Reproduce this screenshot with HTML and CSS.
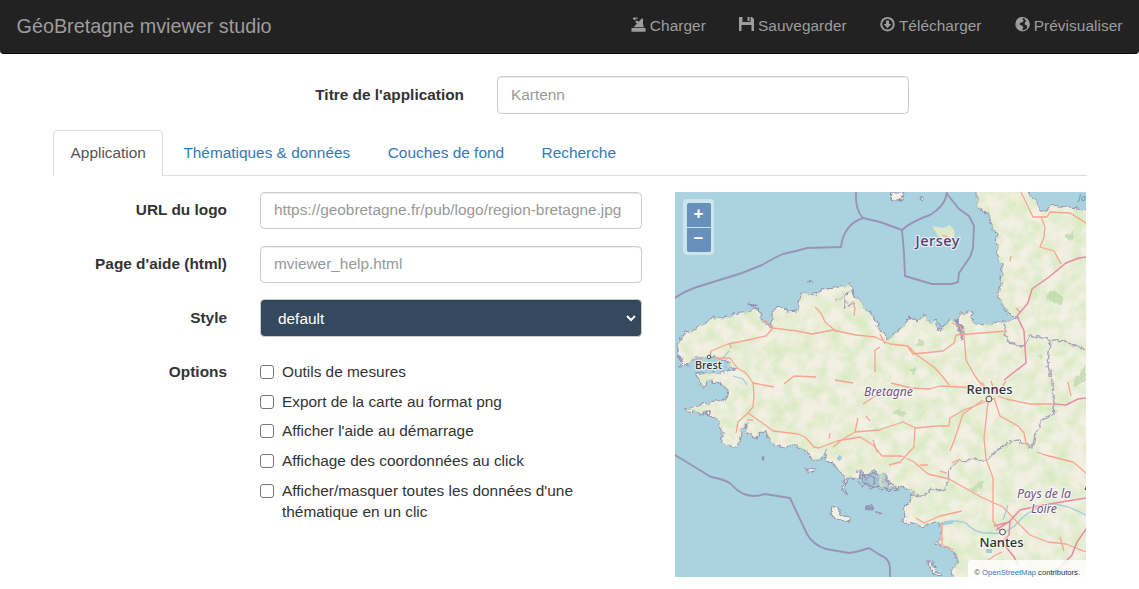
FILE: index.html
```html
<!DOCTYPE html>
<html lang="fr">
<head>
<meta charset="utf-8">
<title>GéoBretagne mviewer studio</title>
<link rel="stylesheet" href="styles.css">
</head>
<body>
<nav class="navbar">
  <a class="brand">GéoBretagne mviewer studio</a>
  <ul class="actions">
    <li><svg class="icon" viewBox="0 0 15 16"><path d="M.5 12h14v3.800H.5z M2.500 11.300L6 7.500 4.200 5.800 5.800 4.300l1.700 1.500L10.800 2.500H12v6l1 2.800z"/><path d="M1.500 2.500l2-1.300 1.700 1.700L3.500 4.300z M4.500 1.500h2v1.200h-2z"/></svg><span>Charger</span></li>
    <li><svg class="icon" viewBox="0 0 15 16"><path d="M0 1h3.500v5h8V1H13l2 2v12h-2.500V9h-10v6H0z M8.500 1h2v4h-2z"/></svg><span>Sauvegarder</span></li>
    <li><svg class="icon" viewBox="0 0 15 16"><circle cx="7.500" cy="8.200" r="6.300" fill="none" stroke="currentColor" stroke-width="1.900"/><path d="M6 4.500h3V8h2.300l-3.800 4.200L3.700 8H6z"/></svg><span>Télécharger</span></li>
    <li><svg class="icon" viewBox="0 0 15 16"><circle cx="7.500" cy="8.200" r="6.700" fill="none" stroke="currentColor" stroke-width="1.100"/><path d="M1 7c0-3 2-5 5-5.700l2 .8-.5 1.600 1.500.8-2 2-1.800.3-.7 1.700 2.800 1.200 1 1.800-1.500 3.500C3 14.500 1 11 1 7z M9.500 2l3 1.500 2 4-.5 3.500-1.500 1.500-.8-3.200-2-.8.300-2.500 1.500-1-1.500-1z"/></svg><span>Prévisualiser</span></li>
  </ul>
</nav>
<main class="container">
  <div class="title-row">
    <label class="label" for="title">Titre de l'application</label>
    <input class="control title-input" id="title" placeholder="Kartenn">
  </div>
  <ul class="tabs">
    <li class="tab active">Application</li>
    <li class="tab">Thématiques &amp; données</li>
    <li class="tab">Couches de fond</li>
    <li class="tab">Recherche</li>
  </ul>
  <div class="panel">
    <form class="form">
      <label class="label">URL du logo</label>
      <input class="control" placeholder="https://geobretagne.fr/pub/logo/region-bretagne.jpg">
      <label class="label">Page d'aide (html)</label>
      <input class="control" placeholder="mviewer_help.html">
      <label class="label">Style</label>
      <div class="control select"><span>default</span><svg class="chevron" viewBox="0 0 10 7"><path d="M1 1l4 4 4-4"/></svg></div>
      <label class="label">Options</label>
      <div class="options">
        <label class="option"><span class="box"></span><span>Outils de mesures</span></label>
        <label class="option"><span class="box"></span><span>Export de la carte au format png</span></label>
        <label class="option"><span class="box"></span><span>Afficher l'aide au démarrage</span></label>
        <label class="option"><span class="box"></span><span>Affichage des coordonnées au click</span></label>
        <label class="option"><span class="box"></span><span>Afficher/masquer toutes les données d'une thématique en un clic</span></label>
      </div>
    </form>
    <div class="map">
      <svg class="map-canvas" viewBox="675 192 411 385">
        <defs>
          <filter id="rough" filterUnits="userSpaceOnUse" x="665" y="182" width="431" height="405">
            <feTurbulence type="fractalNoise" baseFrequency="0.16" numOctaves="3" seed="4"/>
            <feDisplacementMap in="SourceGraphic" scale="7" xChannelSelector="R" yChannelSelector="G"/>
          </filter>
          <filter id="veg" filterUnits="userSpaceOnUse" x="675" y="192" width="411" height="385" color-interpolation-filters="sRGB">
            <feTurbulence type="fractalNoise" baseFrequency="0.07" numOctaves="5" seed="9"/>
            <feColorMatrix values="0 0 0 0 0.85  0 0 0 0 0.92  0 0 0 0 0.76  2.2 0 0 0 -0.75"/>
          </filter>
          <clipPath id="land"><path d="M678 342L685 332 695 330 700 326 707 322 713 317 723 318 733 315 742 312 750 312 757 308 761 313 761 320 767 323 770 328 773 318 773 311 782 308 787 312 798 311 798 303 802 295 803 292 813 295 823 290 833 288 845 285 850 283 853 290 855 297 862 302 865 308 872 315 880 330 887 340 895 333 902 327 910 318 917 322 925 315 930 323 935 320 937 330 943 327 948 323 952 318 958 327 960 340 963 328 957 318 960 313 973 311 971 317 973 322 983 325 1000 322 1013 321 1020 317 1013 315 1007 312 1001 303 998 292 1001 282 1002 265 999 263 997 252 998 232 993 230 992 222 987 212 977 207 975 192H1086V577H953L952 570 958 562 955 553 947 547 935 543 941 537 940 523 933 522 923 527 913 523 903 522 905 515 903 508 910 502 912 493 905 488 897 486 890 488 880 487 877 470 867 475 860 470 857 479 847 477 842 475 837 468 825 458 828 450 820 460 812 460 805 450 793 445 783 447 770 443 767 433 760 432 757 438 745 432 748 422 743 427 741 437 737 447 722 445 722 430 717 420 707 411 700 413 683 410 710 403 723 400 729 398 728 390 720 383 707 380 703 388 697 375 707 373 727 372 737 368 727 367 730 362 713 357 695 358 688 365 680 366 682 362 678 352z"/></clipPath>
        </defs>
        <rect x="675" y="192" width="411" height="385" fill="#aad3df"/>
        <g filter="url(#rough)" stroke="#9590b0" stroke-width="1.200" stroke-linejoin="round">
          <path fill="#f2efe3" d="M678 342L685 332 695 330 700 326 707 322 713 317 723 318 733 315 742 312 750 312 757 308 761 313 761 320 767 323 770 328 773 318 773 311 782 308 787 312 798 311 798 303 802 295 803 292 813 295 823 290 833 288 845 285 850 283 853 290 855 297 862 302 865 308 872 315 880 330 887 340 895 333 902 327 910 318 917 322 925 315 930 323 935 320 937 330 943 327 948 323 952 318 958 327 960 340 963 328 957 318 960 313 973 311 971 317 973 322 983 325 1000 322 1013 321 1020 317 1013 315 1007 312 1001 303 998 292 1001 282 1002 265 999 263 997 252 998 232 993 230 992 222 987 212 977 207 975 180H1100V590H953L952 570 958 562 955 553 947 547 935 543 941 537 940 523 933 522 923 527 913 523 903 522 905 515 903 508 910 502 912 493 905 488 897 486 890 488 880 487 877 470 867 475 860 470 857 479 847 477 845 485 847 495 842 487 845 477 837 468 825 458 828 450 820 460 812 460 805 450 793 445 783 447 770 443 767 433 760 432 757 438 745 432 748 422 743 427 741 437 737 447 722 445 722 430 717 420 707 411 700 413 683 410 710 403 723 400 729 398 728 390 720 383 707 380 703 388 697 375 707 373 727 372 737 368 727 367 730 362 713 357 695 358 688 365 680 366 682 362 678 352z"/>
          <path fill="#f2efe3" d="M832 507L839 510 842 514 851 518 849 523 836 520 831 514z M806 468L815 469 814 472 808 471z M928 561L933 561 932 566 942 575 938 577 929 567z M892 192h13l-3 7-11 2z M919 197l4 2-2 3z"/>
          <path fill="#a4c8da" d="M862 474l6 2 6-3 7 2 5-1 2 6 3 4-6 3-6-2-4 3-6-4-6-2z"/>
          <path fill="none" d="M857 471l3 8 4-5 3 6 5-4 3 7 4-6 4 6 3-4 2 6 5-2 5 6-8 2-4-3-5 4-5-5-5 2-4-5-5 3-5-6M936 320l4 5 1 6"/>
          <path fill="#8da5bd" d="M956 319l4 6 4 8-3 7-3-9z M867 505l6 3-3 2-4-3z M877 512l4 1-3 2z M762 457l3 1-2 2z M808 282l5-1z M749 303l7 2-2 2z"/>
          <path fill="none" d="M850 290l-6 7 3 5-2 5M853 302l-4 4M835 301l6-4 3-6"/>
        </g>
        <g clip-path="url(#land)"><rect x="675" y="192" width="411" height="385" filter="url(#veg)"/>
          <g fill="#b9d7a6" filter="url(#rough)" opacity=".7"><path d="M1046 294l10-4 8 8-4 7-10-4zM1066 234l8-4 0 8-8 2zM918 340l7-1-3 8-4-2zM892 413l8-5 8 7-14 1zM972 487l9-7 2 6-6 7-8-2zM909 371l7-4-2 8zM1074 380l12-15v15l-12 9zM1038 355l7 2-4 3z"/></g>
        </g>
        <path filter="url(#rough)" fill="#aad3df" stroke="#9590b0" d="M1028 180L1028 192 1037 202 1041 210 1047 210 1050 205 1067 207 1086 211H1100V180z"/>
        <path fill="#dfe9c8" d="M932 226L943 228 950 225 954 230 955 236 946 240 938 236z"/>
        <g fill="none" stroke="#9993b5" stroke-width="1.900" stroke-linejoin="round">
          <path d="M675 298Q685 291 697 287L742 273 762 265Q776 257 783 254L796 251 807 248 841 247 842 241Q847 223 863 218Q855 210 856 192M863 218L880 222 902 230Q912 221 930 215Q944 207 947 194L959 209 969 216 974 226 973 248 970 257 959 273 958 282 952 284H932L905 276 904 253 902 230M946 196l1-4"/>
          <path d="M675 455L711 477Q724 479 731 484Q737 491 744 494Q754 498 765 494L790 498 807 534Q813 545 826 549L849 553Q858 552 869 548L880 555Q889 558 890 567L890 577"/>
          <path filter="url(#rough)" opacity=".8" stroke-width="1.500" d="M1003 323L1008 341 1017 346 1026 344 1030 335 1047 339 1064 341 1086 350M1050 339L1048 366 1052 384 1055 415 1043 419 1036 434 1032 448 1018 441 1010 442 995 452 988 459 960 461 948 471 946 489 937 491 931 488 925 496 912 494"/>
        </g>
        <g fill="none" stroke="#a5cbdc" stroke-width="1.300"><path d="M941 523q12-4 25 0 9 11 24 10 18 3 30-13 15-15 35-16l14 3 17 8M722 359l7-8M733 376l10 3 4 6"/><path d="M941 524l12-2" stroke-width="3"/><path d="M838 460l3-4M986 551h6" stroke-width="4"/><path d="M1003 520l5-15"/></g>
        <g fill="none" stroke="#f7a48e" stroke-width="1.300" stroke-linejoin="round">
          <path d="M710 357L711 351 728 344 748 340 766 336 773 328 764 320M773 328L797 331 812 334 833 330 856 335 875 337 890 344 908 346 917 355 935 368 943 377 949 385M815 307L821 313 825 322 837 332M853 301l2 8-1 7M908 347l5 7 30-3 11-8 2-8 51-4M952 323l8 3 4 10 2 24 9 16 9 12M880 334l5 10M715 358h15l7 10 9 5 7 10 21 4M784 384l10-8 22 1M835 380l18 3M880 347l-5 3v22M730 344l1 4"/>
          <path d="M753 382l1 14-1 11-5 6 13 9 12 9 25 3 7 3 9 10 5 1 18-7 23-4 13 8 9 11h20l12 6 14 12 21 5 32 18 22 10 15 16 12 12 18 7 18 2 20 8 12 10M748 413l-10 9-2 11M753 420h-6M833 447l10-8 12-7 3-14M855 432l24-2 24-8 13 6 21-2h12l1-8 14-8 31-12M915 427l-1 20-14 15-11 3M988 402l-4 36 2 21 7 19v43l8 11M990 396l-8-14M983 400l-20 14-9 27-4 10M994 398l6 18 18 10 6 7 2 10 5 4M998 396l8 3 24 5h24M996 395l-5-14M997 394l9-13M978 388l-38-2-10 3-19-1-20-5M863 404l12-8 15-4M962 511l-22 5-16 7-8-5M942 523v22l12 5M1037 452l8 3 28 7 13 11M920 465l8 0M940 471l7 2M952 463l8-4M1060 537l4 14M1002 552l-8 4-6 4M873 440l4 12M830 433l-1 6M866 416l4 5M1021 192l12 25h14l3-5 20 1 16 10M1041 217l4 10-1 10-4 10 14 4 7 13M1010 261l1-5M1020 312l-4-4M942 235l8 3M1068 382l3 14"/>
        </g>
        <g fill="none" stroke="#e88aa5" stroke-width="1.500"><path d="M1086 257l-7 1-13 5-17 14-17 12-4 14-11 13 7 15 2 32-13 10-9 7M1054 404l12 1 12-6 8-1M994 526l15-4 11-12 23-5 43-7M1002 542l12 15 4 8M1086 529l-9 13-5 13-14 14-8 8M996 530l14-9-1 14-8 8"/></g>
        <g fill="#f4f0ea" stroke="#555"><circle cx="709" cy="357" r="1.700"/><circle cx="989" cy="399" r="2.900"/><circle cx="1002.500" cy="532" r="2.900"/></g>
        <g class="place">
          <text x="708.500" y="369" textLength="27" class="city small">Brest</text>
          <text x="989.500" y="394" textLength="46" class="city">Rennes</text>
          <text x="1001.500" y="547" textLength="44" class="city">Nantes</text>
          <text x="937.500" y="246" textLength="44" class="island">Jersey</text>
          <text x="888.500" y="396" textLength="49" class="region">Bretagne</text>
          <text x="1044" y="498" textLength="54" class="region">Pays de la</text>
          <text x="1044" y="513" textLength="26" class="region">Loire</text>
          <text x="1082" y="201" class="water">Ja</text>
          <text x="1088" y="490" class="city small">A</text>
        </g>
      </svg>
      <div class="zoom"><span class="zoom-button">+</span><span class="zoom-button">−</span></div>
      <div class="attribution">© <a>OpenStreetMap</a> contributors.</div>
    </div>
  </div>
</main>
</body>
</html>
```
FILE: styles.css
```css
* { box-sizing: border-box; }
body {
  margin: 0;
  overflow: hidden;
  background: #fff;
  color: #333;
  font: 15.4px/22px "Liberation Sans", Arial, sans-serif;
}
ul { list-style: none; margin: 0; padding: 0; }
.navbar {
  height: 54px;
  padding: 0 16.5px 2px 16.5px;
  display: flex;
  justify-content: space-between;
  align-items: center;
  background: #222;
  border-bottom: 1px solid #080808;
  border-radius: 0 0 4px 4px;
  color: #9d9d9d;
}
.brand { font-size: 19.8px; }
.actions { display: flex; gap: 33.2px; letter-spacing: .05px; }
.actions li { display: flex; align-items: center; gap: 4px; white-space: nowrap; }
.icon { width: 15px; height: 16px; fill: currentColor; margin-top: -3px; }
.container { width: 1034px; margin: 22px 0 0 53px; }
.title-row { display: flex; gap: 33px; }
.title-row .label { width: 411px; padding-top: 8px; }
.label { font-weight: 700; text-align: right; padding-top: 7px; }
.control {
  height: 37.4px;
  width: 100%;
  padding: 5px 13px 7px;
  border: 1px solid #ccc;
  border-radius: 4.4px;
  background: #fff;
  box-shadow: inset 0 1px 1px rgba(0, 0, 0, .075);
  font: inherit;
}
.control::placeholder { color: #999; opacity: 1; }
.title-input { width: 412px; height: 38px; padding: 6px 13px; }
.tabs { display: flex; gap: 2.3px; height: 46px; margin-top: 16px; border-bottom: 1px solid #ddd; }
.tab { height: 46px; padding: 11px 16.6px; border: 1px solid transparent; color: #337ab7; white-space: nowrap; }
.tab.active { color: #555; border-color: #ddd; border-bottom-color: #fff; border-radius: 4.4px 4.4px 0 0; }
.panel { display: flex; justify-content: space-between; margin-top: 16px; padding-right: 1px; }
.form {
  display: grid;
  grid-template-columns: 174px 382px;
  grid-template-rows: 37.4px 37.4px 37.4px auto;
  column-gap: 33px;
  row-gap: 16.5px;
  align-content: start;
}
.select {
  display: flex;
  align-items: center;
  justify-content: space-between;
  margin-top: -.4px;
  padding: 1px 5px 0 17px;
  background: #34495e;
  color: #fff;
}
.chevron { width: 10px; height: 7px; fill: none; stroke: #fff; stroke-width: 2; }
.options { display: flex; flex-direction: column; gap: 8.200px; padding-top: 7.300px; }
.option { display: flex; gap: 8px; line-height: 21.5px; width: 340px; }
.box { flex: none; width: 14px; height: 14px; margin-top: 4px; border: 1px solid #767676; border-radius: 3px; }
.map { position: relative; width: 411px; height: 385px; }
.map-canvas { display: block; width: 411px; height: 385px; }
.place {
  font-family: "Noto Sans", sans-serif;
  text-anchor: middle;
  paint-order: stroke;
  stroke: rgba(255, 255, 255, .65);
  stroke-width: 2.5px;
  stroke-linejoin: round;
}
.city { font-size: 13px; font-weight: 500; fill: #333; }
.small { font-size: 11px; }
.island { font-size: 14.5px; font-weight: 500; fill: #5a3d70; }
.region { font-size: 12.3px; font-style: italic; fill: #745585; }
.water { font-size: 9px; font-style: italic; fill: #5d98bd; stroke: none; }
.zoom {
  position: absolute;
  left: 8px;
  top: 7px;
  display: grid;
  gap: 1px;
  padding: 3.500px;
  border-radius: 4px;
  background: rgba(255, 255, 255, .4);
}
.zoom-button {
  width: 24px;
  height: 24px;
  background: #6790bb;
  border-radius: 2px 2px 0 0;
  color: #fff;
  font: 700 17px/21px "Liberation Sans", Arial, sans-serif;
  text-align: center;
}
.zoom-button:last-child { border-radius: 0 0 2px 2px; }
.attribution {
  position: absolute;
  right: 0;
  bottom: 0;
  height: 17px;
  width: 118px;
  padding-right: 6px;
  background: rgba(255, 255, 255, .8);
  border-radius: 4px 0 0;
  font-size: 7.700px;
  line-height: 25px;
  letter-spacing: -.03px;
  text-align: right;
  white-space: nowrap;
}
.attribution a { color: #337ab7; }
```
